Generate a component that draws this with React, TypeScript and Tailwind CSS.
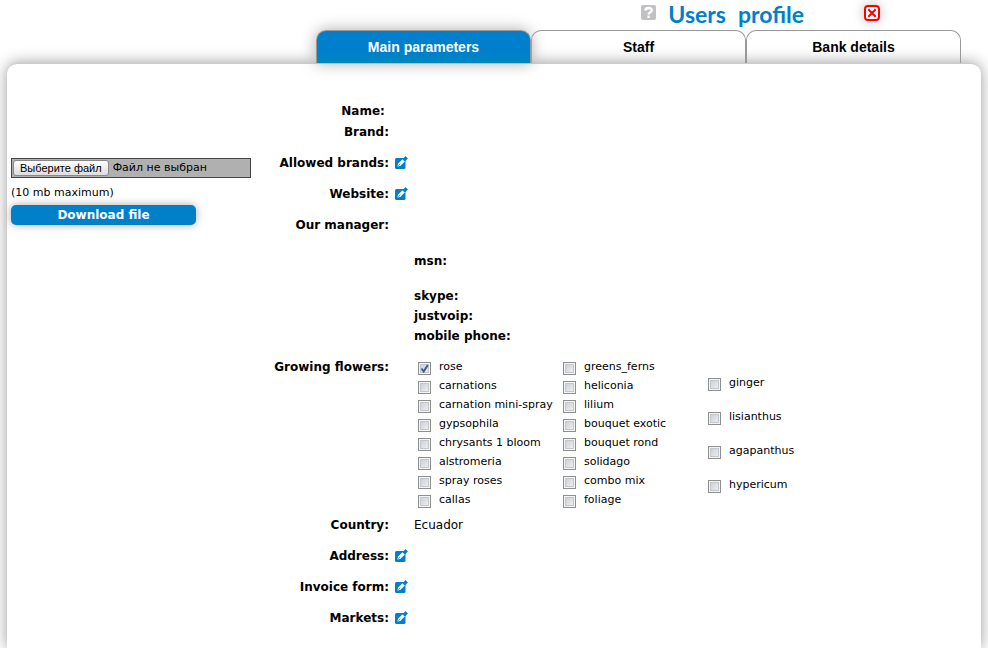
import { useState } from 'react';
import type { ReactNode } from 'react';

const tabs = ['Main parameters', 'Staff', 'Bank details'];

const flowerColumns = [
  [
    'rose',
    'carnations',
    'carnation mini-spray',
    'gypsophila',
    'chrysants 1 bloom',
    'alstromeria',
    'spray roses',
    'callas',
  ],
  [
    'greens_ferns',
    'heliconia',
    'lilium',
    'bouquet exotic',
    'bouquet rond',
    'solidago',
    'combo mix',
    'foliage',
  ],
  ['ginger', 'lisianthus', 'agapanthus', 'hypericum'],
];

function HelpIcon() {
  return (
    <svg width="15" height="15" viewBox="0 0 15 15" aria-hidden>
      <rect width="15" height="15" rx="2" fill="#c0c1c3" />
      <path
        d="M4.4 5.6C4.4 2.2 10.8 2.2 10.8 5.2C10.8 7.4 7.6 7 7.6 9.6"
        fill="none"
        stroke="#fff"
        strokeWidth="2.4"
      />
      <rect x="6.4" y="10.6" width="2.4" height="2.4" fill="#fff" />
    </svg>
  );
}

function CloseIcon() {
  return (
    <svg width="16" height="16" viewBox="0 0 16 16" aria-hidden>
      <rect x="1" y="1" width="14" height="14" rx="3" fill="#fff" stroke="#f00" strokeWidth="2" />
      <path d="M4.3 4.3L11.7 11.7M11.7 4.3L4.3 11.7" stroke="#f00" strokeWidth="2" />
    </svg>
  );
}

function EditIcon() {
  return (
    <svg width="13" height="13" viewBox="0 0 13 13" aria-hidden>
      <rect x="0" y="2" width="10.5" height="11" rx="1.5" fill="#0080c9" />
      <path d="M2.2 10.8L3.2 7.4L7.4 3.2L9.8 5.6L5.6 9.8Z" fill="#fff" />
      <path d="M2.2 10.8L5.2 7.8" stroke="#0080c9" strokeWidth="0.6" />
      <path d="M7.8 2.6L9.2 1.6L10.4 0L13 2.4L11.6 3.8L10.4 5.2Z" fill="#0080c9" />
    </svg>
  );
}

interface RowProps {
  label: ReactNode;
  editable?: boolean;
  className?: string;
  children?: ReactNode;
}

function Row({ label, editable = false, className = '', children }: RowProps) {
  return (
    <div className={`flex items-start ${className}`}>
      <div className="w-[138px] shrink-0 text-right font-bold">{label}</div>
      <div className="flex h-[18px] w-[25px] shrink-0 items-center pl-1.5">
        {editable && (
          <button type="button" aria-label="Edit" className="cursor-pointer">
            <EditIcon />
          </button>
        )}
      </div>
      <div className="min-w-0 flex-1">{children}</div>
    </div>
  );
}

export default function App() {
  const [activeTab, setActiveTab] = useState('Main parameters');
  const [selected, setSelected] = useState<string[]>(['rose']);
  const [fileName, setFileName] = useState('Файл не выбран');

  const toggle = (name: string) => {
    setSelected((prev) =>
      prev.includes(name) ? prev.filter((n) => n !== name) : [...prev, name],
    );
  };

  return (
    <div className="flex min-h-screen flex-col overflow-hidden bg-white font-['DejaVu_Sans',Verdana,sans-serif] text-xs text-black">
      {/* Title bar */}
      <header className="flex h-[30px] items-start justify-end pr-[108px]">
        <button type="button" aria-label="Help" className="mt-[5px] mr-3">
          <HelpIcon />
        </button>
        <h1 className="flex gap-3 font-['Lato',sans-serif] text-[23px] leading-7 font-bold text-[#0080c9]">
          <span>Users</span>
          <span>profile</span>
        </h1>
        <button
          type="button"
          aria-label="Close"
          className="mt-[5px] ml-[60px] rounded shadow-[0_0_12px_#bbb]"
        >
          <CloseIcon />
        </button>
      </header>

      {/* Tabs */}
      <nav className="flex justify-end pr-[27px] font-['Liberation_Sans',Arial,sans-serif] text-sm font-bold">
        {tabs.map((tab) => (
          <button
            key={tab}
            type="button"
            onClick={() => setActiveTab(tab)}
            className={`h-[33px] w-[215px] rounded-t-[10px] border border-b-0 border-[#999] ${
              tab === activeTab
                ? 'relative z-10 bg-linear-to-b from-[#0080cc] from-70% to-[#0088bb] text-white shadow-[0_0_15px_#aaa]'
                : 'bg-white'
            }`}
          >
            {tab}
          </button>
        ))}
      </nav>

      <main className="mx-[7px] flex flex-1 items-start rounded-t-[10px] border-t border-[#ccc] bg-white px-1 pt-9 pb-2 shadow-[0_0_15px_#999]">
        {/* Logo upload */}
        <section className="w-[240px] shrink-0 pt-[58px] text-[11px]">
          <div className="relative flex h-5 items-center gap-1 border border-[#444] bg-[#b0b0b0] px-px">
            <span className="flex h-4 items-center rounded-[3px] border border-[#888] bg-linear-to-b from-white to-[#ddd] px-1.5 font-['Liberation_Sans',Arial,sans-serif]">
              Выберите файл
            </span>
            <span>{fileName}</span>
            <input
              type="file"
              aria-label="Выберите файл"
              className="absolute inset-0 w-full cursor-pointer opacity-0"
              onChange={(e) => setFileName(e.target.files?.[0]?.name ?? 'Файл не выбран')}
            />
          </div>
          <p className="mt-[5px] leading-5">(10 mb maximum)</p>
          <button
            type="button"
            className="mt-0.5 block h-5 w-[185px] rounded-[5px] bg-[#0080c9] text-xs font-bold text-white shadow-[0_0_8px_#aaa]"
          >
            Download file
          </button>
        </section>

        {/* Profile fields */}
        <section className="min-w-0 flex-1 pt-px leading-[21px]">
          <Row label={<>Name:&nbsp;</>} />
          <Row label="Brand:" />
          <Row label="Allowed brands:" editable className="mt-2.5" />
          <Row label="Website:" editable className="mt-2.5" />
          <Row label="Our manager:" className="mt-2.5">
            <div className="pt-9 leading-5 font-bold">
              <p>msn:</p>
              <p className="mt-[15px]">skype:</p>
              <p>justvoip:</p>
              <p>mobile phone:</p>
            </div>
          </Row>
          <Row label="Growing flowers:" className="mt-[11px]">
            <div className="flex pl-1 text-[11px]">
              {flowerColumns.map((column) => (
                <div
                  key={column[0]}
                  className={`flex w-[145px] flex-col justify-center ${column.length < 8 ? 'gap-[15px]' : ''}`}
                >
                  {column.map((name) => (
                    <label key={name} className="flex h-[19px] items-center whitespace-nowrap">
                      <span className="relative mt-1 mr-2 flex shrink-0">
                        <input
                          type="checkbox"
                          checked={selected.includes(name)}
                          onChange={() => toggle(name)}
                          className="peer size-[13px] appearance-none border border-[#8e8f8f] bg-linear-to-br from-[#c4c9d0] to-[#f6f6f6] shadow-[inset_0_0_0_1px_#f4f4f4,inset_0_0_0_2px_#c4c8cc]"
                        />
                        <svg
                          viewBox="0 0 13 13"
                          className="pointer-events-none absolute inset-0 hidden peer-checked:block"
                          aria-hidden
                        >
                          <path d="M3.5 6.5L5.7 9.5L9.8 3" fill="none" stroke="#3f5aa0" strokeWidth="2" />
                        </svg>
                      </span>
                      {name}
                    </label>
                  ))}
                </div>
              ))}
            </div>
          </Row>
          <Row label="Country:" className="mt-1.5">
            Ecuador
          </Row>
          <Row label="Address:" editable className="mt-2.5" />
          <Row label="Invoice form:" editable className="mt-2.5" />
          <Row label="Markets:" editable className="mt-2.5" />
        </section>
      </main>
    </div>
  );
}
